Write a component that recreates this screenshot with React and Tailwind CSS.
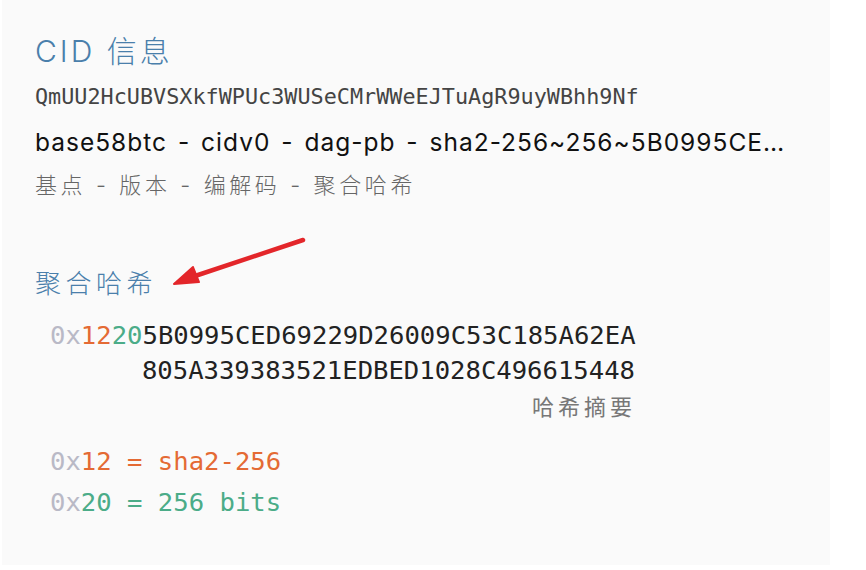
export default function App() {
  const mono = { fontFamily: '"DejaVu Sans Mono", "Liberation Mono", monospace' };
  return (
    <div className="w-[866px] h-[570px] bg-white">
      <div className="ml-[2px] w-[828px] h-[565px] bg-[#fafafa] pl-[33px] pt-[30px] relative font-['Inter','Noto_Sans_CJK_SC',sans-serif]">
        <h1 className="text-[30px] leading-[42px] font-light tracking-[3px] text-[#4a7fab]">CID 信息</h1>
        <p className="mt-[12px] text-[21.8px] leading-[26px] text-[#444]" style={mono}>
          QmUU2HcUBVSXkfWPUc3WUSeCMrWWeEJTuAgR9uyWBhh9Nf
        </p>
        <p className="mt-[16px] w-[764px] truncate text-[24.5px] leading-[32px] text-[#111] tracking-[1px] [word-spacing:3px]">
          base58btc - cidv0 - dag-pb - sha2-256~256~5B0995CED69229D26009C53C185A62EA805A339383521EDBED1028C496615448
        </p>
        <p className="mt-[12px] text-[22px] leading-[30px] tracking-[3.6px] text-[#666] font-light">
          基点 - 版本 - 编解码 - 聚合哈希
        </p>
        <h2 className="mt-[66px] text-[26px] leading-[36px] tracking-[4.5px] text-[#4a7fab] font-light">聚合哈希</h2>
        <div className="mt-[16px] ml-[15px] w-[585px] text-[25.6px]" style={mono}>
          <div className="text-right text-[#222] leading-[35px]">
            <div>
              <span className="text-[#b9b9c6]">0x</span>
              <span className="text-[#e46a34]">12</span>
              <span className="text-[#4bac88]">20</span>
              5B0995CED69229D26009C53C185A62EA
            </div>
            <div>805A339383521EDBED1028C496615448</div>
          </div>
          <div className="mt-[2px] mr-[-1px] text-right text-[22px] leading-[30px] text-[#777] tracking-[4px] font-['Noto_Sans_CJK_SC',sans-serif]">
            哈希摘要
          </div>
          <div className="mt-[21px] leading-[41px]">
            <div>
              <span className="text-[#b9b9c6]">0x</span>
              <span className="text-[#e46a34]">12 = sha2-256</span>
            </div>
            <div>
              <span className="text-[#b9b9c6]">0x</span>
              <span className="text-[#4bac88]">20 = 256 bits</span>
            </div>
          </div>
        </div>
        <svg className="absolute left-[165px] top-[234px]" width="145" height="56" viewBox="0 0 145 56">
          <line x1="136" y1="6" x2="22" y2="44" stroke="#e3262a" strokeWidth="4.5" strokeLinecap="round" />
          <polygon points="7,50 26,33 32,48" fill="#e3262a" stroke="#e3262a" strokeWidth="2" strokeLinejoin="round" />
        </svg>
      </div>
    </div>
  );
}
